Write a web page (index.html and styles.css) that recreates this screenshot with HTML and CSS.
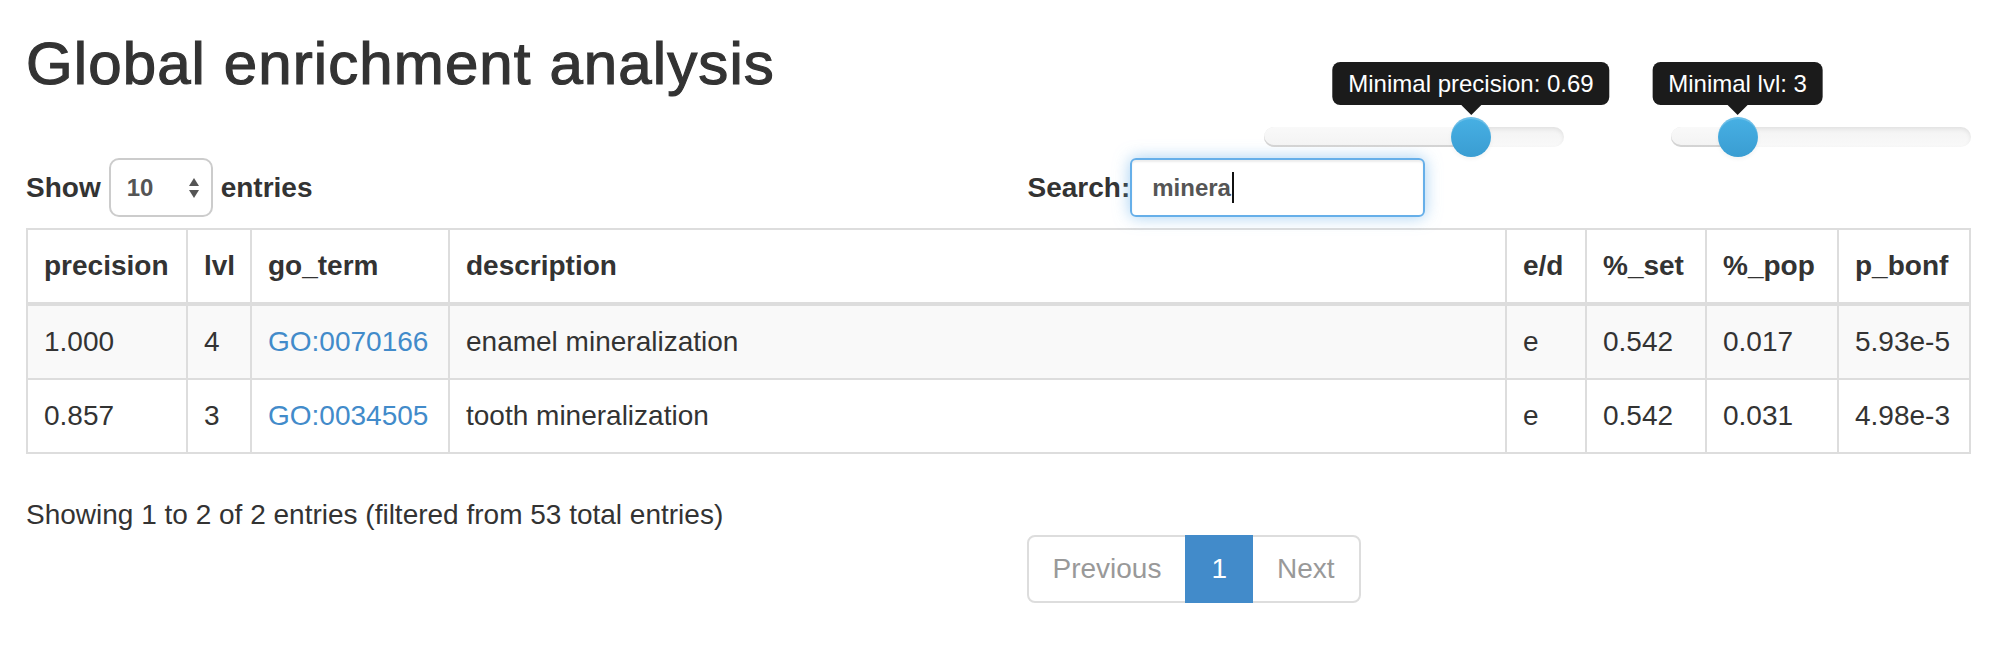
FILE: index.html
```html
<!DOCTYPE html>
<html lang="en">
<head>
	<meta charset="UTF-8">
	<meta name="viewport" content="width=device-width, initial-scale=1.0">
	<title>Global enrichment analysis</title>
	<link rel="stylesheet" href="styles.css">
</head>
<body>
<div class="page">
	<div class="header">
		<h2 class="title">Global enrichment analysis</h2>
		<div class="sliders">
			<div class="slider">
				<div class="slider-track">
					<div class="slider-selection" style="width: 69%"></div>
				</div>
				<div class="slider-handle" style="left: 69%"></div>
				<div class="slider-tooltip" style="left: 69%">Minimal precision: 0.69</div>
			</div>
			<div class="slider">
				<div class="slider-track">
					<div class="slider-selection" style="width: 22.2%"></div>
				</div>
				<div class="slider-handle" style="left: 22.2%"></div>
				<div class="slider-tooltip" style="left: 22.2%">Minimal lvl: 3</div>
			</div>
		</div>
	</div>

	<div class="controls">
		<div class="length">
			<label class="control-label">
				Show
				<span class="select-wrap">
					<select class="select">
						<option>10</option>
						<option>25</option>
						<option>50</option>
						<option>100</option>
					</select>
					<svg class="select-arrows" width="10" height="20" viewBox="0 0 10 20">
						<polygon points="0,8 5,0 10,8" fill="#555"/>
						<polygon points="0,12 10,12 5,20" fill="#555"/>
					</svg>
				</span>
				entries
			</label>
		</div>
		<div class="filter">
			<label class="control-label search-label">
				Search:
				<span class="search-input">minera<i class="caret"></i></span>
			</label>
		</div>
	</div>

	<table class="results">
		<thead>
			<tr>
				<th class="col-precision">precision</th>
				<th class="col-lvl">lvl</th>
				<th class="col-term">go_term</th>
				<th>description</th>
				<th class="col-ed">e/d</th>
				<th class="col-set">%_set</th>
				<th class="col-pop">%_pop</th>
				<th class="col-bonf">p_bonf</th>
			</tr>
		</thead>
		<tbody>
			<tr class="odd">
				<td>1.000</td>
				<td>4</td>
				<td><a href="#">GO:0070166</a></td>
				<td>enamel mineralization</td>
				<td>e</td>
				<td>0.542</td>
				<td>0.017</td>
				<td>5.93e-5</td>
			</tr>
			<tr>
				<td>0.857</td>
				<td>3</td>
				<td><a href="#">GO:0034505</a></td>
				<td>tooth mineralization</td>
				<td>e</td>
				<td>0.542</td>
				<td>0.031</td>
				<td>4.98e-3</td>
			</tr>
		</tbody>
	</table>

	<div class="footer">
		<div class="info">Showing 1 to 2 of 2 entries (filtered from 53 total entries)</div>
		<ul class="pagination">
			<li class="disabled"><a href="#">Previous</a></li>
			<li class="active"><a href="#">1</a></li>
			<li class="disabled"><a href="#">Next</a></li>
		</ul>
	</div>
</div>
</body>
</html>
```

FILE: styles.css
```css
* {
	box-sizing: border-box;
}
body {
	margin: 0;
	font-family: "Liberation Sans", Arial, sans-serif;
	font-size: 28px;
	line-height: 40px;
	color: #333;
	background: #fff;
}
.page {
	padding: 0 45px 0 26px;
}

/* header: title + sliders */
.header {
	display: flex;
	align-items: flex-start;
}
.title {
	margin: 31px 0 0;
	font-size: 60px;
	line-height: 66px;
	font-weight: normal;
	letter-spacing: 1.1px;
	-webkit-text-stroke: 1.2px #333;
}
.sliders {
	display: flex;
	gap: 107px;
	margin: 117px 0 0 auto;
}
.slider {
	position: relative;
	width: 300px;
	height: 40px;
}
.slider-track {
	position: relative;
	margin-top: 10px;
	height: 20px;
	border-radius: 10px;
	background: linear-gradient(to bottom, #f3f3f3, #f9f9f9);
	box-shadow: inset 0 2px 4px rgba(0, 0, 0, 0.08);
}
.slider-selection {
	height: 100%;
	border-radius: 10px;
	background: linear-gradient(to bottom, #f9f9f9, #f3f3f3);
	box-shadow: inset 0 -2px 0 rgba(0, 0, 0, 0.13);
}
.slider-handle {
	position: absolute;
	top: 0;
	width: 40px;
	height: 40px;
	margin-left: -20px;
	border-radius: 50%;
	background: linear-gradient(to bottom, #47b0e4, #3a9dd2);
	box-shadow: inset 0 2px 0 rgba(255, 255, 255, 0.2), 0 2px 4px rgba(0, 0, 0, 0.05);
}
.slider-tooltip {
	position: absolute;
	bottom: 52px;
	transform: translateX(-50%);
	padding: 6px 16px;
	font-size: 24px;
	line-height: 31px;
	color: #fff;
	white-space: nowrap;
	background: #1b1b1b;
	border-radius: 8px;
}
.slider-tooltip::after {
	content: "";
	position: absolute;
	top: 100%;
	left: 50%;
	margin-left: -10px;
	border-width: 10px 10px 0;
	border-style: solid;
	border-color: #1b1b1b transparent transparent;
}

/* length + filter */
.controls {
	display: grid;
	grid-template-columns: 1fr 1fr;
	margin-top: 1px;
	height: 59px;
}
.control-label {
	display: flex;
	align-items: center;
	gap: 8px;
	height: 59px;
	font-weight: bold;
}
.filter {
	padding-left: 29px;
}
.search-label {
	gap: 0;
}
.select-wrap {
	position: relative;
	display: inline-block;
}
.select {
	display: block;
	width: 104px;
	height: 59px;
	padding: 0 0 0 16px;
	font-family: inherit;
	font-size: 24px;
	font-weight: bold;
	color: #555;
	background: #fff;
	border: 2px solid #ccc;
	border-radius: 10px;
	-webkit-appearance: none;
	appearance: none;
}
.select-arrows {
	position: absolute;
	top: 20px;
	left: 80px;
	pointer-events: none;
}
.search-input {
	display: flex;
	align-items: center;
	width: 295px;
	height: 59px;
	padding-left: 20px;
	font-size: 24px;
	color: #555;
	border: 2px solid #66afe9;
	border-radius: 6px;
	box-shadow: inset 0 2px 2px rgba(0, 0, 0, 0.075), 0 0 16px rgba(102, 175, 233, 0.6);
}
.caret {
	display: inline-block;
	width: 2px;
	height: 31px;
	margin-left: 1px;
	background: #111;
}

/* table */
.results {
	width: 100%;
	margin-top: 11px;
	border-collapse: collapse;
	table-layout: fixed;
}
.results th,
.results td {
	padding: 16px;
	text-align: left;
	border: 2px solid #ddd;
	white-space: nowrap;
}
.results thead th {
	border-bottom-width: 4px;
}
.results tbody tr.odd {
	background: #f9f9f9;
}
.results a {
	color: #428bca;
	text-decoration: none;
}
.col-precision { width: 160px; }
.col-lvl { width: 64px; }
.col-term { width: 198px; }
.col-ed { width: 80px; }
.col-set { width: 120px; }
.col-pop { width: 132px; }
.col-bonf { width: 132px; }

/* info + paging */
.footer {
	display: grid;
	grid-template-columns: 1fr 1fr;
}
.info {
	grid-column: 1 / -1;
	margin-top: 41px;
}
.pagination {
	grid-column: 2;
	display: flex;
	margin: 0 0 0 28px;
	padding: 0;
	list-style: none;
}
.pagination li a {
	display: block;
	padding: 12px 24px;
	line-height: 40px;
	color: #999;
	text-decoration: none;
	background: #fff;
	border: 2px solid #ddd;
}
.pagination li + li a {
	margin-left: -2px;
}
.pagination li:first-child a {
	border-radius: 8px 0 0 8px;
}
.pagination li:last-child a {
	border-radius: 0 8px 8px 0;
}
.pagination li.active a {
	position: relative;
	color: #fff;
	background: #428bca;
	border-color: #428bca;
}
```
